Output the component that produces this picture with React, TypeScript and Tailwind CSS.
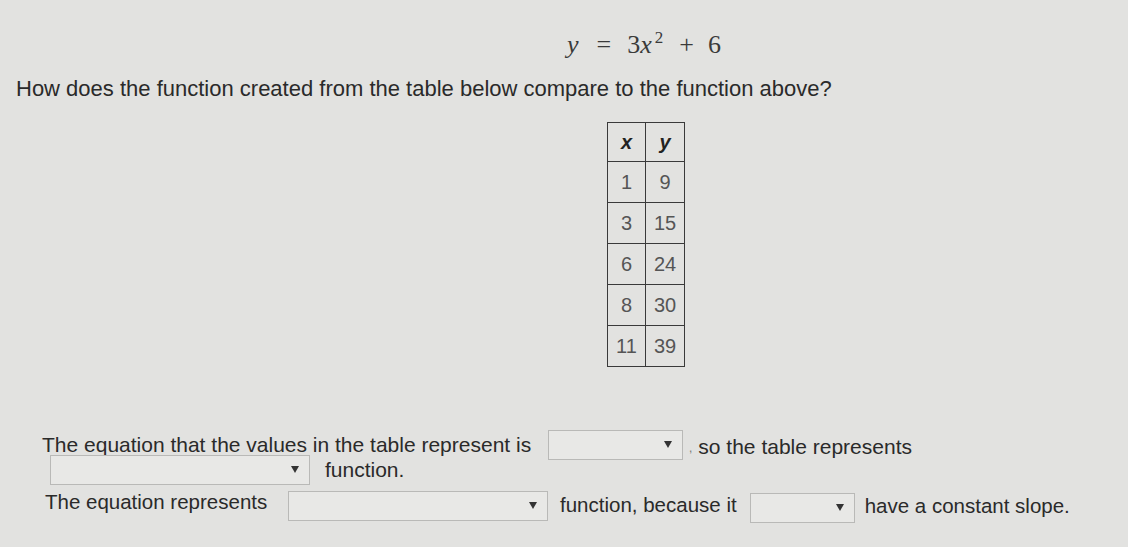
import React from "react";

function Dropdown({ w }: { w: string }) {
  return (
    <div
      className={`${w} h-[30px] shrink-0 border border-[#b9b9b7] bg-[#e8e8e6] flex items-center justify-end pr-[10px]`}
    >
      <svg width="8" height="7" viewBox="0 0 8 7">
        <polygon points="0,0 8,0 4,7" fill="#333" />
      </svg>
    </div>
  );
}

export default function App() {
  const rows = [
    ["1", "9"],
    ["3", "15"],
    ["6", "24"],
    ["8", "30"],
    ["11", "39"],
  ];
  return (
    <div className="w-[1128px] h-[547px] overflow-hidden bg-[#e2e2e0] text-[#2a2a2a] font-['Liberation_Sans',Arial,sans-serif]">
      <div className="pt-[31px] pl-[567px] h-[66px] flex items-start font-['Liberation_Serif',serif] text-[26px] leading-[28px] text-[#3a3a3a]">
        <span className="italic">y</span>
        <span className="ml-[18px]">=</span>
        <span className="ml-[16px]">3</span>
        <span className="italic">x</span>
        <span className="ml-[3px] text-[17px] leading-[17px] -mt-[2px]">2</span>
        <span className="ml-[16px]">+</span>
        <span className="ml-[14px]">6</span>
      </div>
      <div className="pl-[16px] text-[22px] leading-[26px] mt-[10px] whitespace-nowrap">
        How does the function created from the table below compare to the function above?
      </div>
      <div className="ml-[607px] mt-[20px] w-[78px]">
        <table className="border-collapse w-[78px] text-[20px]">
          <thead>
            <tr className="h-[39px]">
              <th className="border border-[#3a3a3a] w-[38px] italic font-bold text-center text-[#222]">x</th>
              <th className="border border-[#3a3a3a] w-[39px] italic font-bold text-center text-[#222]">y</th>
            </tr>
          </thead>
          <tbody>
            {rows.map((r, i) => (
              <tr key={i} className="h-[41px]">
                <td className="border border-[#3a3a3a] text-center text-[#555] font-normal">{r[0]}</td>
                <td className="border border-[#3a3a3a] text-center text-[#555] font-normal">{r[1]}</td>
              </tr>
            ))}
          </tbody>
        </table>
      </div>
      <div className="mt-[65px] text-[21px] leading-[24px]">
        <div className="h-[25px] flex items-center">
          <span className="ml-[42px] w-[493px] whitespace-nowrap">The equation that the values in the table represent is</span>
          <div className="ml-[13px]"><Dropdown w="w-[135px]" /></div>
          <span className="ml-[6px] text-[#777] text-[12px] mt-[6px]">,</span>
          <span className="ml-[6px] whitespace-nowrap mt-[4px]">so the table represents</span>
        </div>
        <div className="h-[25px] flex items-center">
          <div className="ml-[50px]"><Dropdown w="w-[260px]" /></div>
          <span className="ml-[15px] whitespace-nowrap">function.</span>
        </div>
        <div className="h-[25px] mt-[7px] flex items-center text-[20.5px]">
          <span className="ml-[45px] w-[228px] whitespace-nowrap">The equation represents</span>
          <div className="ml-[15px] mt-[8px]"><Dropdown w="w-[260px]" /></div>
          <span className="ml-[12px] whitespace-nowrap mt-[6px]">function, because it</span>
          <div className="ml-[13px] mt-[12px]"><Dropdown w="w-[105px]" /></div>
          <span className="ml-[10px] whitespace-nowrap mt-[9px]">have a constant slope.</span>
        </div>
      </div>
    </div>
  );
}
